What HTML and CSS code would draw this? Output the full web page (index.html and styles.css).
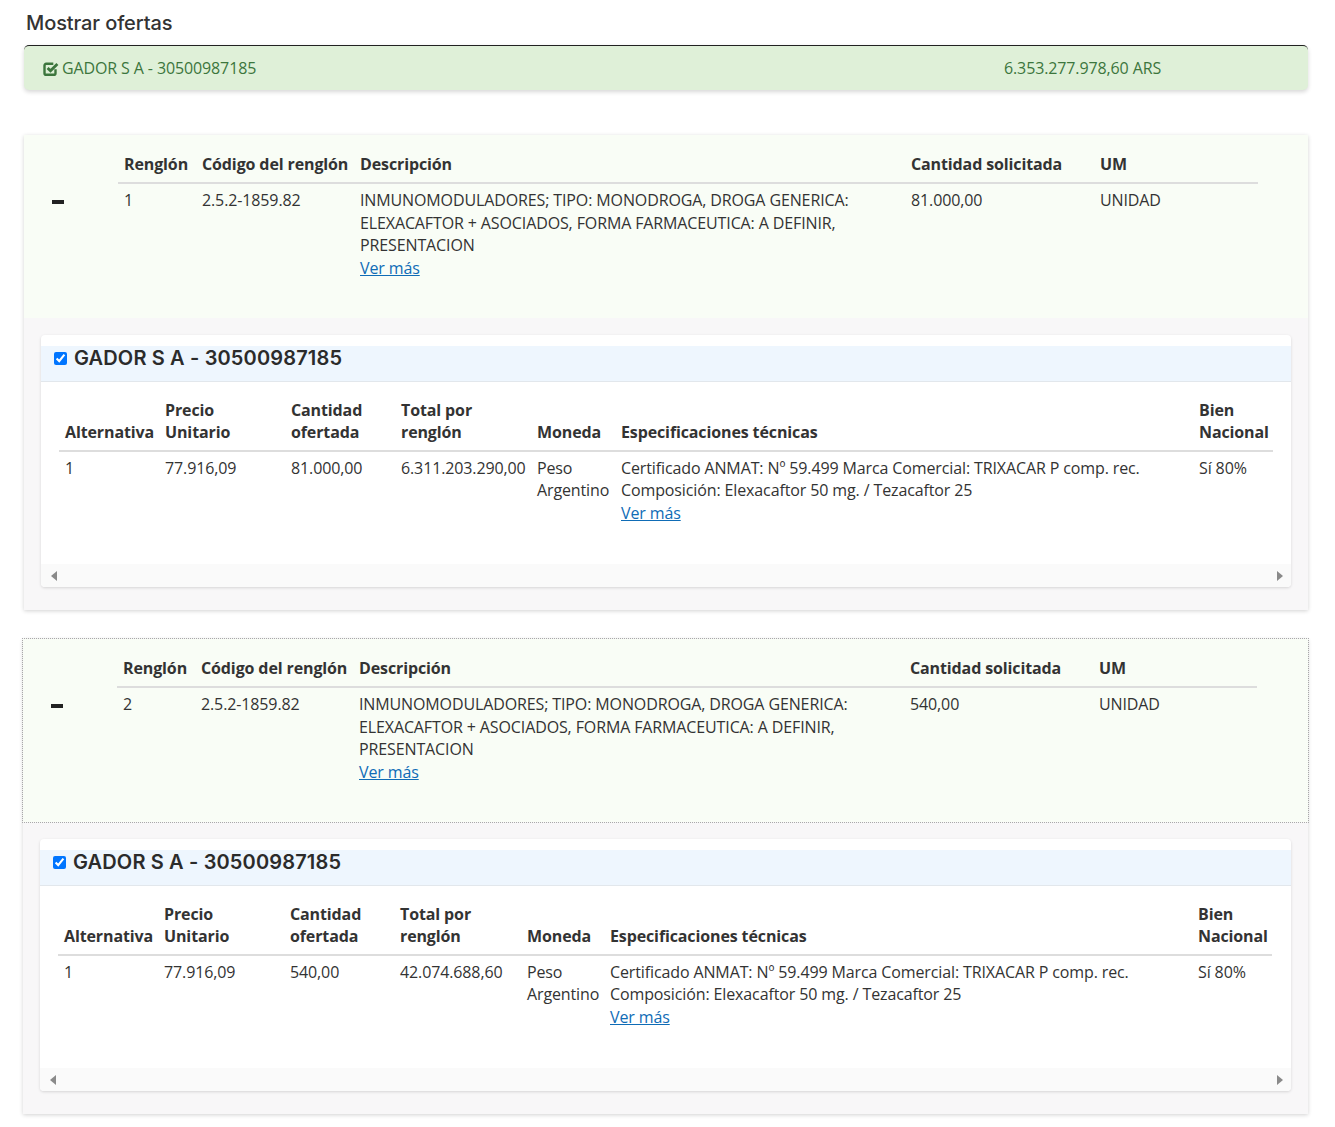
FILE: index.html
```html
<!DOCTYPE html>
<html lang="es">
<head>
<meta charset="utf-8">
<title>Mostrar ofertas</title>
<link rel="stylesheet" href="styles.css">
</head>
<body>
<div class="page">
  <h2 class="page-title">Mostrar ofertas</h2>

  <div class="summary">
    <div class="summary-name">
      <svg class="check-icon" width="16" height="15" viewBox="0 0 16 15" aria-hidden="true">
        <path d="M12.5 8.2v4a1.6 1.6 0 0 1-1.6 1.6H3.1a1.6 1.6 0 0 1-1.6-1.6V4.4a1.6 1.6 0 0 1 1.6-1.6h7.2" fill="none" stroke="#3c763d" stroke-width="2.4"/>
        <path d="M4.6 6.9l2.9 2.9 6.9-6.9" fill="none" stroke="#3c763d" stroke-width="2.8"/>
      </svg>
      <span>GADOR S A - 30500987185</span>
    </div>
    <div class="summary-amount">6.353.277.978,60 ARS</div>
  </div>

  <section class="card">
    <div class="item">
      <div class="item-toggle"><span class="minus"></span></div>
      <table class="item-table">
        <thead>
          <tr>
            <th class="w-ren">Renglón</th>
            <th class="w-cod">Código del renglón</th>
            <th class="w-des">Descripción</th>
            <th class="w-can">Cantidad solicitada</th>
            <th class="w-um">UM</th>
          </tr>
        </thead>
        <tbody>
          <tr>
            <td>1</td>
            <td>2.5.2-1859.82</td>
            <td>INMUNOMODULADORES; TIPO: MONODROGA, DROGA GENERICA: ELEXACAFTOR + ASOCIADOS, FORMA FARMACEUTICA: A DEFINIR, PRESENTACION<div><a href="#" class="more">Ver más</a></div></td>
            <td>81.000,00</td>
            <td>UNIDAD</td>
          </tr>
        </tbody>
      </table>
    </div>
    <div class="offers">
      <div class="offer">
        <div class="offer-head">
          <input type="checkbox" class="offer-check" checked>
          <span class="offer-title">GADOR S A - 30500987185</span>
        </div>
        <div class="offer-body">
          <table class="offer-table">
            <thead>
              <tr>
                <th class="o-alt">Alternativa</th>
                <th class="o-pre">Precio<br>Unitario</th>
                <th class="o-can">Cantidad<br>ofertada</th>
                <th class="o-tot">Total por<br>renglón</th>
                <th class="o-mon">Moneda</th>
                <th class="o-esp">Especificaciones técnicas</th>
                <th class="o-bien">Bien<br>Nacional</th>
              </tr>
            </thead>
            <tbody>
              <tr>
                <td>1</td>
                <td>77.916,09</td>
                <td>81.000,00</td>
                <td>6.311.203.290,00</td>
                <td>Peso Argentino</td>
                <td>Certificado ANMAT: Nº 59.499 Marca Comercial: TRIXACAR P comp. rec. Composición: Elexacaftor 50 mg. / Tezacaftor 25<div><a href="#" class="more">Ver más</a></div></td>
                <td>Sí 80%</td>
              </tr>
            </tbody>
          </table>
        </div>
        <div class="hscroll"><span class="arrow-left"></span><span class="arrow-right"></span></div>
      </div>
    </div>
  </section>

  <section class="card card-focus">
    <div class="item item-focus">
      <div class="item-toggle"><span class="minus"></span></div>
      <table class="item-table">
        <thead>
          <tr>
            <th class="w-ren">Renglón</th>
            <th class="w-cod">Código del renglón</th>
            <th class="w-des">Descripción</th>
            <th class="w-can">Cantidad solicitada</th>
            <th class="w-um">UM</th>
          </tr>
        </thead>
        <tbody>
          <tr>
            <td>2</td>
            <td>2.5.2-1859.82</td>
            <td>INMUNOMODULADORES; TIPO: MONODROGA, DROGA GENERICA: ELEXACAFTOR + ASOCIADOS, FORMA FARMACEUTICA: A DEFINIR, PRESENTACION<div><a href="#" class="more">Ver más</a></div></td>
            <td>540,00</td>
            <td>UNIDAD</td>
          </tr>
        </tbody>
      </table>
    </div>
    <div class="offers">
      <div class="offer">
        <div class="offer-head">
          <input type="checkbox" class="offer-check" checked>
          <span class="offer-title">GADOR S A - 30500987185</span>
        </div>
        <div class="offer-body">
          <table class="offer-table offer-table-b">
            <thead>
              <tr>
                <th class="o-alt">Alternativa</th>
                <th class="o-pre">Precio<br>Unitario</th>
                <th class="o-can">Cantidad<br>ofertada</th>
                <th class="o-tot">Total por<br>renglón</th>
                <th class="o-mon">Moneda</th>
                <th class="o-esp">Especificaciones técnicas</th>
                <th class="o-bien">Bien<br>Nacional</th>
              </tr>
            </thead>
            <tbody>
              <tr>
                <td>1</td>
                <td>77.916,09</td>
                <td>540,00</td>
                <td>42.074.688,60</td>
                <td>Peso Argentino</td>
                <td>Certificado ANMAT: Nº 59.499 Marca Comercial: TRIXACAR P comp. rec. Composición: Elexacaftor 50 mg. / Tezacaftor 25<div><a href="#" class="more">Ver más</a></div></td>
                <td>Sí 80%</td>
              </tr>
            </tbody>
          </table>
        </div>
        <div class="hscroll"><span class="arrow-left"></span><span class="arrow-right"></span></div>
      </div>
    </div>
  </section>
</div>
</body>
</html>
```

FILE: styles.css
```css
* { box-sizing: border-box; }

html, body {
  margin: 0;
  padding: 0;
  background: #ffffff;
}

body {
  font-family: "Open Sans", "Liberation Sans", sans-serif;
  font-size: 16px;
  line-height: 22.4px;
  letter-spacing: -0.12px;
  color: #333333;
}

.page {
  width: 1284px;
  margin-left: 24px;
  padding-top: 11px;
  padding-bottom: 20px;
}

.page-title {
  margin: 0 0 0 2px;
  font-family: "Inter", "Noto Sans", sans-serif;
  font-weight: 500;
  font-size: 20px;
  line-height: 24px;
  letter-spacing: -0.1px;
  height: 34px;
  color: #333333;
}

.summary {
  display: flex;
  align-items: center;
  height: 45px;
  padding-left: 19px;
  background: #dff0d8;
  border-top: 1px solid #222222;
  border-radius: 5px;
  box-shadow: 0 2px 4px rgba(0, 0, 0, 0.16);
  color: #3c763d;
}

.summary-name {
  flex: 0 0 961px;
  display: flex;
  align-items: center;
  gap: 3px;
}

.check-icon { display: block; }

.card {
  margin-top: 45px;
  background: #f8f7f8;
  box-shadow: 0 1px 4px rgba(0, 0, 0, 0.18);
}

.card-focus {
  margin-top: 29px;
  margin-left: -1px;
}

.item {
  display: flex;
  height: 183px;
  padding-top: 10px;
  background: #f9fdf6;
}

.item-focus {
  outline: 1px dotted #a9a9a9;
}

.item-toggle {
  flex: 0 0 94px;
  padding-left: 28px;
  padding-top: 55px;
}

.minus {
  display: block;
  width: 12px;
  height: 4px;
  background: #222222;
}

table {
  border-collapse: collapse;
  border-spacing: 0;
  table-layout: fixed;
}

th {
  font-weight: 700;
  text-align: left;
  vertical-align: bottom;
  white-space: nowrap;
  padding: 8px 6px 7px;
  border-bottom: 2px solid #dddddd;
}

td {
  vertical-align: top;
  padding: 5px 6px 8px;
}

.item-table { width: 1140px; }
.w-ren { width: 78px; }
.w-cod { width: 158px; }
.w-des { width: 551px; }
.w-can { width: 189px; }
.w-um  { width: 164px; }

.more {
  color: #0f6cb6;
  text-decoration: underline;
}

.offers {
  padding: 17px 17px 23px;
}

.offer {
  background: #ffffff;
  border-radius: 4px;
  box-shadow: 0 1px 3px rgba(0, 0, 0, 0.14);
  padding-top: 11px;
  overflow: hidden;
}

.offer-head {
  display: flex;
  align-items: center;
  height: 36px;
  padding: 0 0 11px 13px;
  background: #eef6fe;
  border-bottom: 1px solid #e2e7ec;
}

.offer-check {
  width: 13px;
  height: 13px;
  margin: 0 7px 0 0;
}

.offer-title {
  font-family: "Inter", "Noto Sans", sans-serif;
  font-weight: 600;
  font-size: 20px;
  line-height: 24px;
  letter-spacing: 0.15px;
  color: #2b2b2b;
}

.offer-body {
  padding: 9px 18px 32px;
}

.offer-table { width: 1214px; }
.o-alt  { width: 100px; }
.o-pre  { width: 126px; }
.o-can  { width: 110px; }
.o-tot  { width: 136px; }
.o-mon  { width: 84px; }
.o-esp  { width: 578px; }
.o-bien { width: 80px; }

.offer-table th { padding-bottom: 6px; }

.offer-table-b .o-tot { width: 127px; }
.offer-table-b .o-mon { width: 83px; }
.offer-table-b .o-esp { width: 588px; }

.hscroll {
  display: flex;
  justify-content: space-between;
  align-items: center;
  height: 23px;
  padding: 0 8px 0 10px;
  background: #fafafa;
}

.arrow-left,
.arrow-right {
  display: block;
  width: 0;
  height: 0;
  border-top: 5px solid transparent;
  border-bottom: 5px solid transparent;
}

.arrow-left { border-right: 6px solid #8a8a8a; }
.arrow-right { border-left: 6px solid #8a8a8a; }
```
